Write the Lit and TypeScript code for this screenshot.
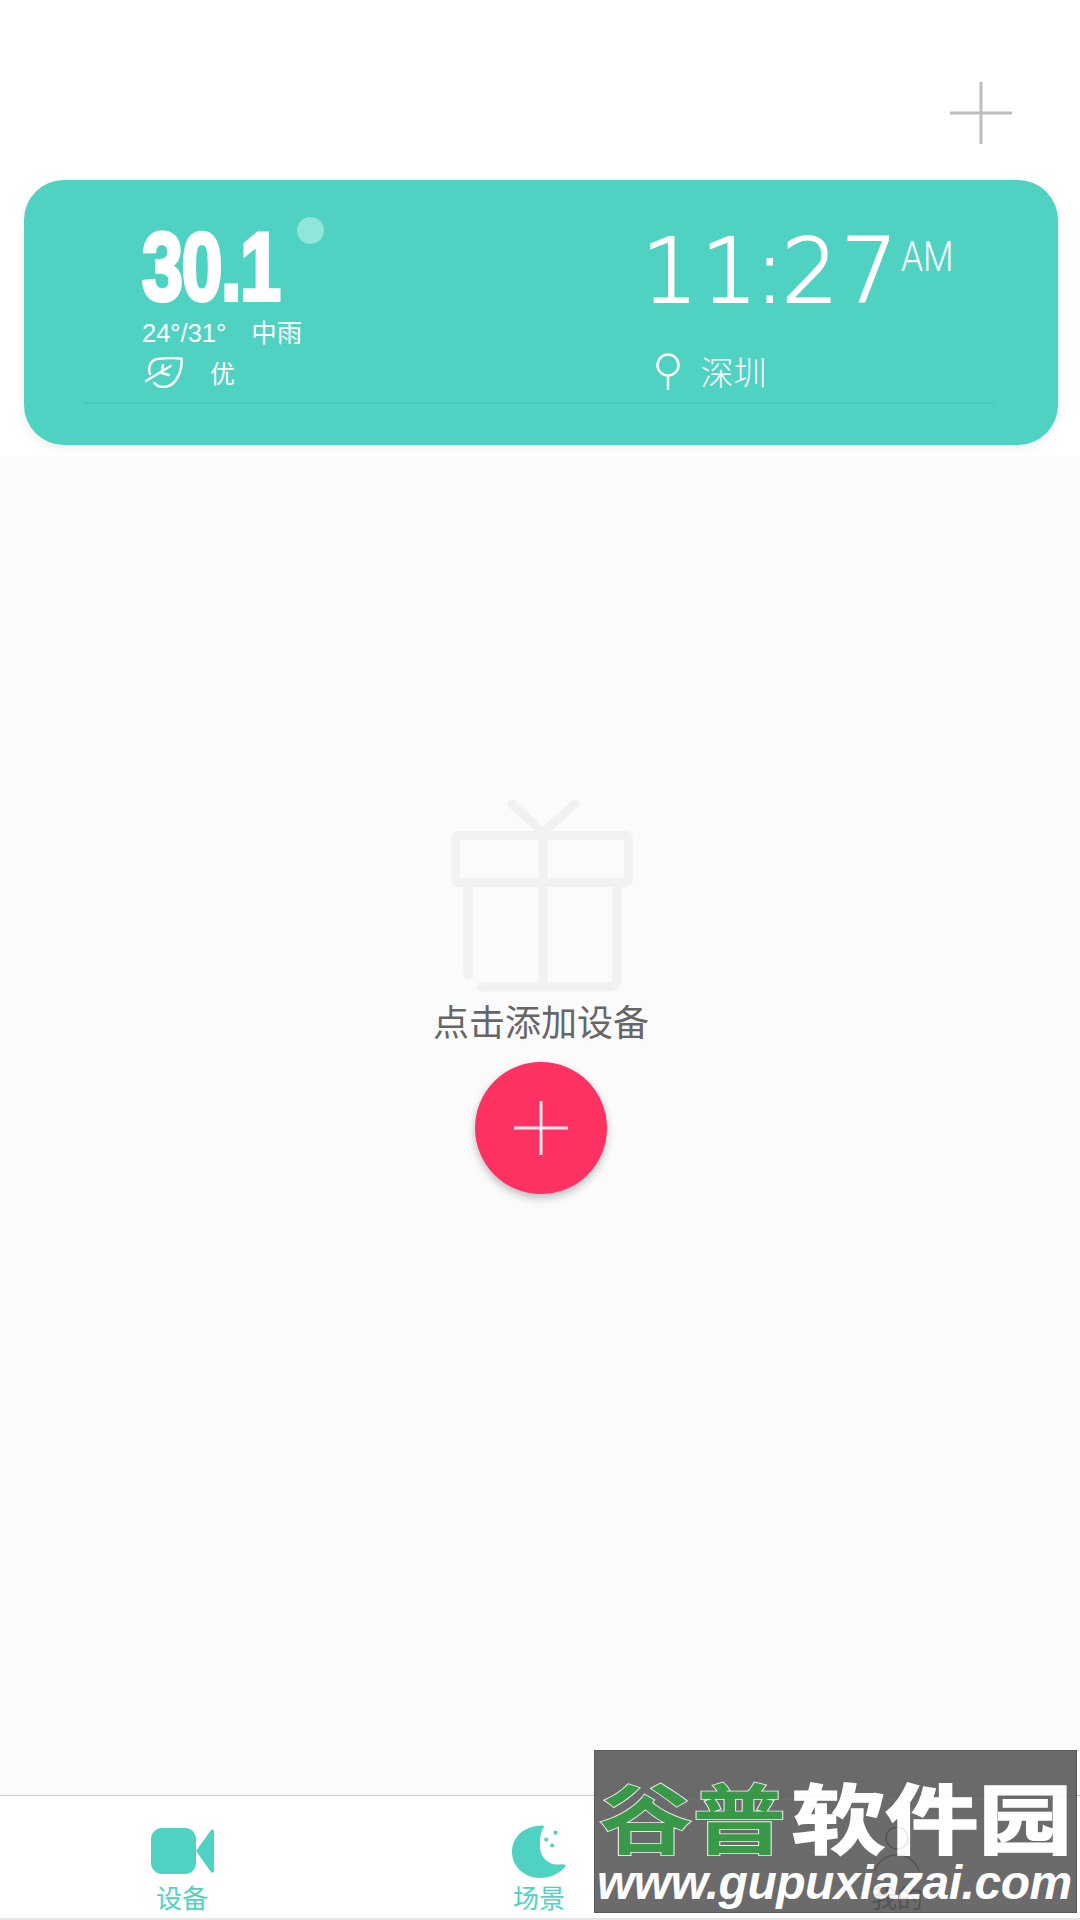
import { LitElement, html, css } from 'lit';
import { customElement } from 'lit/decorators.js';

@customElement('app-root')
export class AppRoot extends LitElement {
  static styles = css`
    :host {
      display: block;
      width: 1080px;
      height: 1920px;
      position: relative;
      overflow: hidden;
      background: #fff;
      font-family: "Liberation Sans", "Noto Sans CJK SC", sans-serif;
    }
    .page {
      height: 1920px;
      display: flex;
      flex-direction: column;
    }
    .top {
      height: 456px;
      flex: none;
      padding: 82px 68px 0 24px;
      box-sizing: border-box;
      display: flex;
      flex-direction: column;
      background: #fff;
    }
    .add {
      align-self: flex-end;
      display: block;
      width: 62px;
      height: 62px;
      margin-bottom: 36px;
    }
    .card {
      width: 1034px;
      height: 265px;
      flex: none;
      box-sizing: border-box;
      border-radius: 40px;
      background: #50d2c2;
      box-shadow: 0 3px 10px rgba(0, 0, 0, 0.08);
      padding: 43px 64px 0 60px;
      display: flex;
      flex-direction: column;
      color: #fff;
    }
    .cols {
      display: flex;
      justify-content: space-between;
      height: 167px;
      padding: 0 0 0 58px;
    }
    .weather {
      display: flex;
      flex-direction: column;
    }
    .temp-row {
      display: flex;
      height: 88px;
    }
    .temp {
      display: block;
      width: 155px;
      font-weight: 700;
      font-size: 97px;
      line-height: 88px;
      letter-spacing: -2px;
      -webkit-text-stroke: 4px #fff;
      transform: scaleX(0.76);
      transform-origin: left center;
      white-space: nowrap;
    }
    .dot {
      width: 27px;
      height: 27px;
      border-radius: 50%;
      background: #90e6da;
      margin: -6px 0 0 0;
    }
    .range {
      display: flex;
      gap: 25px;
      font-size: 25.5px;
      line-height: 30px;
      margin-top: 7px;
    }
    .air {
      display: flex;
      align-items: center;
      gap: 27px;
      font-size: 25px;
      height: 40px;
      margin-top: 6px;
      padding-left: 3px;
    }
    .clock {
      display: flex;
      flex-direction: column;
      padding-right: 39px;
    }
    .time {
      display: flex;
      font-family: "DejaVu Sans", sans-serif;
      font-weight: 200;
      font-size: 89px;
      line-height: 92px;
      height: 92px;
      margin-top: 2px;
      letter-spacing: 3px;
      -webkit-text-stroke: 2px #fff;
    }
    .colon {
      margin: 0 -6px;
    }
    .ampm {
      font-family: Roboto, sans-serif;
      font-weight: 300;
      font-size: 42px;
      line-height: 44px;
      letter-spacing: 0;
      -webkit-text-stroke: 0;
      margin: 10px 0 0 0;
      transform: scaleX(0.84);
      transform-origin: left top;
      width: 54px;
    }
    .place {
      display: flex;
      align-items: center;
      gap: 21px;
      font-size: 33px;
      font-weight: 300;
      height: 40px;
      margin-top: 35px;
      padding-left: 14px;
    }
    .place span {
      margin-top: -3px;
    }
    .rule {
      height: 2px;
      background: #49c8b8;
      margin-top: 12px;
    }
    .empty {
      flex: 1;
      background: #fbfbfb;
      display: flex;
      flex-direction: column;
      align-items: center;
      padding: 344px 0 0 2px;
    }
    .gift {
      display: block;
      width: 200px;
      height: 195px;
    }
    .hint {
      font-size: 36px;
      line-height: 44px;
      color: #666;
      margin-top: 7px;
    }
    .fab {
      width: 132px;
      height: 132px;
      border-radius: 50%;
      background: #fe3163;
      box-shadow: 0 4px 8px rgba(0, 0, 0, 0.25);
      margin-top: 16px;
      display: flex;
      align-items: center;
      justify-content: center;
    }
    .tabs {
      height: 125px;
      flex: none;
      box-sizing: border-box;
      background: #fff;
      border-top: 1px solid #ccc;
      border-bottom: 2px solid #e6e6e6;
      display: grid;
      grid-template-columns: repeat(3, 1fr);
    }
    .tab {
      display: flex;
      flex-direction: column;
      align-items: center;
      font-size: 26px;
      line-height: 30px;
      color: #50d2c2;
    }
    .tab svg {
      display: block;
    }
    .tab .video {
      margin: 32px 0 10px;
    }
    .tab .moon {
      margin: 28px 0 6px 2px;
    }
    .tab .user {
      margin: 31px 0 11px;
    }
    .first {
      padding-left: 4px;
    }
    .second {
      padding-right: 2px;
    }
    .tab.off {
      color: #444;
      padding-right: 6px;
    }
    .mark {
      position: absolute;
      left: 594px;
      top: 1750px;
      width: 483px;
      height: 163px;
      box-sizing: border-box;
      background: #575757;
      border: 1px solid #444;
      opacity: 0.88;
      overflow: hidden;
    }
    .mark-cn {
      position: absolute;
      left: 4px;
      top: 21px;
      display: flex;
      font-family: "Noto Sans CJK SC", sans-serif;
      font-weight: 700;
      font-size: 90px;
      line-height: 100px;
      color: #fff;
      white-space: nowrap;
      transform: scale(1.04, 0.85);
      transform-origin: left top;
    }
    .mark-cn b {
      color: #1f8c31;
      -webkit-text-stroke: 2px #eee;
      paint-order: stroke fill;
      font-weight: 700;
    }
    .mark-cn span {
      -webkit-text-stroke: 2px #fff;
      margin-left: 5px;
    }
    .mark-url {
      position: absolute;
      left: 2px;
      top: 104px;
      font-family: "Liberation Sans", sans-serif;
      font-weight: 700;
      font-style: italic;
      font-size: 48px;
      line-height: 56px;
      letter-spacing: -0.5px;
      color: #fff;
      white-space: nowrap;
    }
  `;

  render() {
    return html`
      <div class="page">
        <div class="top">
          <svg class="add" viewBox="0 0 62 62">
            <path d="M31 0V62M0 31H62" stroke="#bdbdbd" stroke-width="3" fill="none" />
          </svg>
          <div class="card">
            <div class="cols">
              <div class="weather">
                <div class="temp-row">
                  <span class="temp">30.1</span>
                  <span class="dot"></span>
                </div>
                <div class="range"><span>24°/31°</span><span>中雨</span></div>
                <div class="air">
                  <svg width="38" height="32" viewBox="0 0 38 32" fill="none" stroke="#fff" stroke-width="2.4" stroke-linecap="round" stroke-linejoin="round">
                    <path d="M5 18C2 8 8 3 14 2.7C22 2 30 2 36.7 2.7C37 14 32 31 18 31C14 31 11 29 9.5 27" />
                    <path d="M1 25L25.6 10M16.7 17L18 9M16.7 17L24 19" />
                  </svg>
                  <span>优</span>
                </div>
              </div>
              <div class="clock">
                <div class="time"><span>11<span class="colon">:</span>27</span><span class="ampm">AM</span></div>
                <div class="place">
                  <svg width="24" height="38" viewBox="0 0 24 38" fill="none" stroke="#fff" stroke-width="2.5">
                    <circle cx="12" cy="12" r="10.5" />
                    <path d="M12 23V37" />
                  </svg>
                  <span>深圳</span>
                </div>
              </div>
            </div>
            <div class="rule"></div>
          </div>
        </div>
        <div class="empty">
          <svg class="gift" viewBox="0 0 200 195" fill="none" stroke="#f1f1f1" stroke-width="9" stroke-linecap="round" stroke-linejoin="round">
            <rect x="14.5" y="35.5" width="173" height="47" rx="3" />
            <path d="M27 83V175M176 83V178Q176 187 167 187H40M102 36V187M102 33L71 4M102 33L134 4" />
          </svg>
          <div class="hint">点击添加设备</div>
          <div class="fab">
            <svg width="54" height="54" viewBox="0 0 54 54">
              <path d="M27 0V54M0 27H54" stroke="#ffe9ee" stroke-width="3" fill="none" />
            </svg>
          </div>
        </div>
        <div class="tabs">
          <div class="tab first">
            <svg class="video" width="63" height="46" viewBox="0 0 63 46" fill="#50d2c2">
              <rect x="0" y="0" width="45" height="46" rx="11" />
              <path d="M45 23L60 2Q63 0 63 4V42Q63 46 60 44Z" />
            </svg>
            <span>设备</span>
          </div>
          <div class="tab second">
            <svg class="moon" width="56" height="54" viewBox="0 0 54 52" fill="#50d2c2">
              <path d="M29 1.5C10 2 0 14 0 27C0 41 12 52 27 52C38 52 47 47 51.5 41C52 39 50 38.5 47 39C34 40 26 31 27 19C27 12 28 7 30.5 3.5C31.5 2 30.5 1.5 29 1.5Z" />
              <circle cx="42" cy="8.3" r="2" />
              <circle cx="33" cy="15" r="2" />
              <circle cx="38.7" cy="20.7" r="2" />
            </svg>
            <span>场景</span>
          </div>
          <div class="tab off">
            <svg class="user" width="48" height="46" viewBox="0 0 48 46" fill="none" stroke="#444" stroke-width="1.5">
              <circle cx="24" cy="11" r="11" />
              <path d="M2 44A23 23 0 0 1 46 44" />
            </svg>
            <span>我的</span>
          </div>
        </div>
      </div>
      <div class="mark">
        <div class="mark-cn"><b>谷普</b><span>软件园</span></div>
        <div class="mark-url">www.gupuxiazai.com</div>
      </div>
    `;
  }
}
